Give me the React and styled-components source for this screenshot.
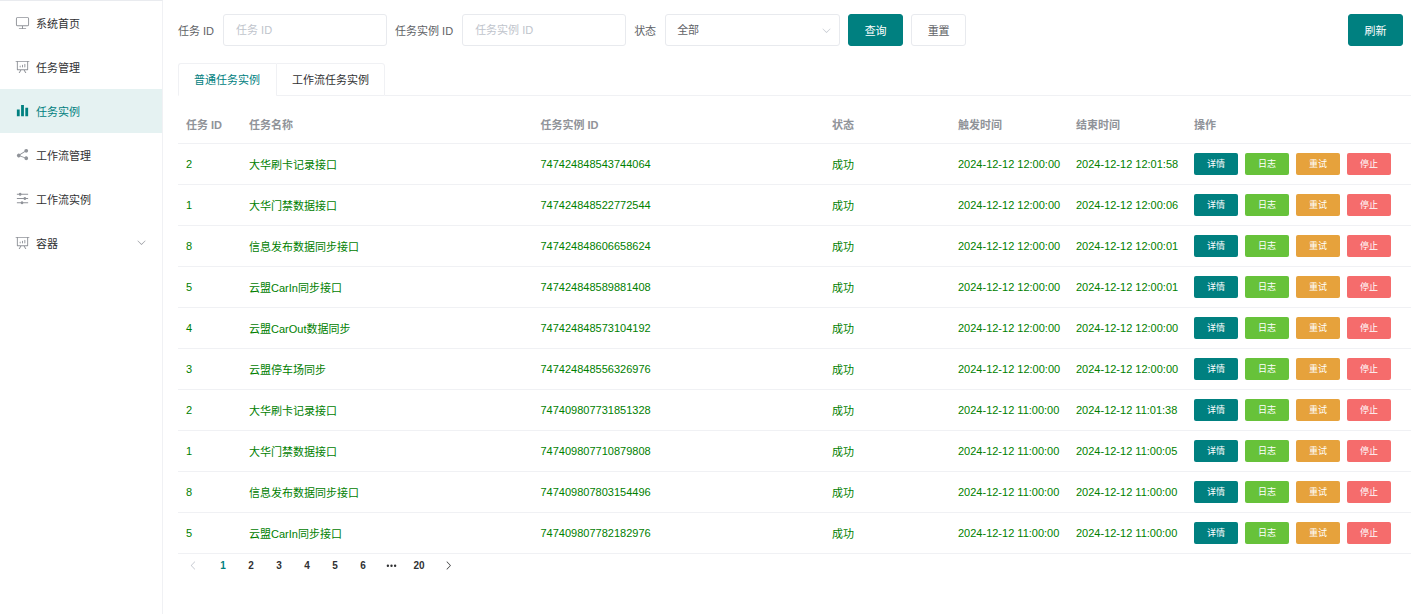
import React, { useState } from 'react';
import styled, { createGlobalStyle } from 'styled-components';

const ICONS = {
  monitor:
    'M544 768v128h192a32 32 0 1 1 0 64H288a32 32 0 1 1 0-64h192V768H192A128 128 0 0 1 64 640V256a128 128 0 0 1 128-128h640a128 128 0 0 1 128 128v384a128 128 0 0 1-128 128zM192 192a64 64 0 0 0-64 64v384a64 64 0 0 0 64 64h640a64 64 0 0 0 64-64V256a64 64 0 0 0-64-64z',
  board:
    'm665.216 768 110.848 192h-73.856L591.36 768H433.024L322.176 960H248.32l110.848-192H160a32 32 0 0 1-32-32V192H64a32 32 0 0 1 0-64h896a32 32 0 1 1 0 64h-64v544a32 32 0 0 1-32 32zM832 192H192v512h640zM352 448a32 32 0 0 1 32 32v64a32 32 0 0 1-64 0v-64a32 32 0 0 1 32-32m160-64a32 32 0 0 1 32 32v128a32 32 0 0 1-64 0V416a32 32 0 0 1 32-32m160-64a32 32 0 0 1 32 32v192a32 32 0 1 1-64 0V352a32 32 0 0 1 32-32',
  histogram: 'M416 896V128h192v768zm-288 0V448h192v448zm576 0V320h192v576z',
  share:
    'm679.872 348.8-301.76 188.608a127.808 127.808 0 0 1 5.12 52.16l279.936 104.96a128 128 0 1 1-22.464 59.904l-279.872-104.96a128 128 0 1 1-16.64-166.272l301.696-188.608a128 128 0 1 1 33.92 54.272z',
  operation:
    'M389.44 768a96.064 96.064 0 0 1 181.12 0H896v64H570.56a96.064 96.064 0 0 1-181.12 0H128v-64zm192-288a96.064 96.064 0 0 1 181.12 0H896v64H762.56a96.064 96.064 0 0 1-181.12 0H128v-64zm-320-288a96.064 96.064 0 0 1 181.12 0H896v64H442.56a96.064 96.064 0 0 1-181.12 0H128v-64z',
  down: 'M831.872 340.864 512 652.672 192.128 340.864a30.592 30.592 0 0 0-42.752 0 29.12 29.12 0 0 0 0 41.6L489.664 714.24a32 32 0 0 0 44.672 0l340.288-331.712a29.12 29.12 0 0 0 0-41.728 30.592 30.592 0 0 0-42.752 0z',
  left: 'M609.408 149.376 277.76 489.6a32 32 0 0 0 0 44.672l331.648 340.352a29.12 29.12 0 0 0 41.728 0 30.592 30.592 0 0 0 0-42.752L339.264 511.936l311.872-319.872a30.592 30.592 0 0 0 0-42.688 29.12 29.12 0 0 0-41.728 0z',
  right:
    'M340.864 149.312a30.592 30.592 0 0 0 0 42.752L652.736 512 340.864 831.872a30.592 30.592 0 0 0 0 42.752 29.12 29.12 0 0 0 41.728 0L714.24 534.336a32 32 0 0 0 0-44.672L382.592 149.376a29.12 29.12 0 0 0-41.728 0z',
  more: 'M176 416a112 112 0 1 1 0 224 112 112 0 0 1 0-224m336 0a112 112 0 1 1 0 224 112 112 0 0 1 0-224m336 0a112 112 0 1 1 0 224 112 112 0 0 1 0-224',
};

const MENUS = [
  { name: '系统首页', icon: 'monitor' },
  { name: '任务管理', icon: 'board' },
  { name: '任务实例', icon: 'histogram' },
  { name: '工作流管理', icon: 'share' },
  { name: '工作流实例', icon: 'operation' },
];

const TABS = ['普通任务实例', '工作流任务实例'];

const ROWS = [
  [2, '大华刷卡记录接口', '747424848543744064', '2024-12-12 12:00:00', '2024-12-12 12:01:58'],
  [1, '大华门禁数据接口', '747424848522772544', '2024-12-12 12:00:00', '2024-12-12 12:00:06'],
  [8, '信息发布数据同步接口', '747424848606658624', '2024-12-12 12:00:00', '2024-12-12 12:00:01'],
  [5, '云盟CarIn同步接口', '747424848589881408', '2024-12-12 12:00:00', '2024-12-12 12:00:01'],
  [4, '云盟CarOut数据同步', '747424848573104192', '2024-12-12 12:00:00', '2024-12-12 12:00:00'],
  [3, '云盟停车场同步', '747424848556326976', '2024-12-12 12:00:00', '2024-12-12 12:00:00'],
  [2, '大华刷卡记录接口', '747409807731851328', '2024-12-12 11:00:00', '2024-12-12 11:01:38'],
  [1, '大华门禁数据接口', '747409807710879808', '2024-12-12 11:00:00', '2024-12-12 11:00:05'],
  [8, '信息发布数据同步接口', '747409807803154496', '2024-12-12 11:00:00', '2024-12-12 11:00:00'],
  [5, '云盟CarIn同步接口', '747409807782182976', '2024-12-12 11:00:00', '2024-12-12 11:00:00'],
];

function Icon({ name, size = 15 }) {
  return (
    <svg
      viewBox="0 0 1024 1024"
      width={size}
      height={size}
      fill="currentColor"
      aria-hidden="true"
    >
      <path d={ICONS[name]} />
    </svg>
  );
}

function Sidebar() {
  const [current, setCurrent] = useState('任务实例');

  return (
    <StyledSidebar>
      {MENUS.map(({ name, icon }) => (
        <MenuLink
          key={name}
          href="#"
          $active={current === name}
          onClick={() => setCurrent(name)}
        >
          <Icon name={icon} />
          <span>{name}</span>
        </MenuLink>
      ))}
      <MenuLink as="button" type="button">
        <Icon name="board" />
        <span>容器</span>
        <MenuArrow>
          <Icon name="down" size={11} />
        </MenuArrow>
      </MenuLink>
    </StyledSidebar>
  );
}

function SearchForm() {
  const empty = { taskId: '', instanceId: '', status: '' };
  const [form, setForm] = useState(empty);

  const onChange = (e) => {
    const { value, name } = e.target;
    setForm({ ...form, [name]: value });
  };

  return (
    <Toolbar onSubmit={(e) => e.preventDefault()}>
      <Field>
        <label htmlFor="taskId">任务 ID</label>
        <TextInput
          id="taskId"
          name="taskId"
          value={form.taskId}
          onChange={onChange}
          placeholder="任务 ID"
        />
      </Field>
      <Field>
        <label htmlFor="instanceId">任务实例 ID</label>
        <TextInput
          id="instanceId"
          name="instanceId"
          value={form.instanceId}
          onChange={onChange}
          placeholder="任务实例 ID"
        />
      </Field>
      <Field>
        <label htmlFor="status">状态</label>
        <SelectWrap>
          <select id="status" name="status" value={form.status} onChange={onChange}>
            <option value="">全部</option>
            <option value="success">成功</option>
          </select>
          <Icon name="down" size={11} />
        </SelectWrap>
      </Field>
      <Button type="submit" $primary>
        查询
      </Button>
      <Button type="button" onClick={() => setForm(empty)}>
        重置
      </Button>
      <Spacer />
      <Button type="button" $primary>
        刷新
      </Button>
    </Toolbar>
  );
}

function InstanceTable() {
  return (
    <Table>
      <colgroup>
        <Col $width={63} />
        <Col />
        <Col />
        <Col $width={126} />
        <Col $width={118} />
        <Col $width={118} />
        <Col $width={225} />
      </colgroup>
      <thead>
        <tr>
          <th>任务 ID</th>
          <th>任务名称</th>
          <th>任务实例 ID</th>
          <th>状态</th>
          <th>触发时间</th>
          <th>结束时间</th>
          <th>操作</th>
        </tr>
      </thead>
      <tbody>
        {ROWS.map(([id, name, instanceId, start, end]) => (
          <tr key={instanceId}>
            <td>{id}</td>
            <td>{name}</td>
            <td>{instanceId}</td>
            <td>成功</td>
            <td>{start}</td>
            <td>{end}</td>
            <td>
              <Actions>
                <ActionButton type="button" $color="#008080">
                  详情
                </ActionButton>
                <ActionButton type="button" $color="#67c23a">
                  日志
                </ActionButton>
                <ActionButton type="button" $color="#e6a23c">
                  重试
                </ActionButton>
                <ActionButton type="button" $color="#f56c6c">
                  停止
                </ActionButton>
              </Actions>
            </td>
          </tr>
        ))}
      </tbody>
    </Table>
  );
}

function Pagination() {
  const [page, setPage] = useState(1);

  return (
    <Pager aria-label="分页">
      <PageArrow
        type="button"
        aria-label="上一页"
        disabled={page === 1}
        onClick={() => setPage(page - 1)}
      >
        <Icon name="left" size={11} />
      </PageArrow>
      {[1, 2, 3, 4, 5, 6].map((num) => (
        <PageButton
          key={num}
          type="button"
          $active={page === num}
          onClick={() => setPage(num)}
        >
          {num}
        </PageButton>
      ))}
      <PageButton type="button" aria-label="更多">
        <Icon name="more" size={11} />
      </PageButton>
      <PageButton type="button" $active={page === 20} onClick={() => setPage(20)}>
        20
      </PageButton>
      <PageArrow
        type="button"
        aria-label="下一页"
        disabled={page === 20}
        onClick={() => setPage(page + 1)}
      >
        <Icon name="right" size={11} />
      </PageArrow>
    </Pager>
  );
}

function App() {
  const [tab, setTab] = useState(TABS[0]);

  return (
    <>
      <GlobalStyle />
      <Layout>
        <Sidebar />
        <Main>
          <SearchForm />
          <TabBar role="tablist">
            {TABS.map((name) => (
              <Tab
                key={name}
                type="button"
                role="tab"
                aria-selected={tab === name}
                $active={tab === name}
                onClick={() => setTab(name)}
              >
                {name}
              </Tab>
            ))}
            <TabLine />
          </TabBar>
          <InstanceTable />
          <Pagination />
        </Main>
      </Layout>
    </>
  );
}

export default App;

const GlobalStyle = createGlobalStyle`
  * {
    box-sizing: border-box;
  }
  body {
    margin: 0;
    background: #fff;
    color: #303133;
  }
  body, button, input, select {
    font-family: "Liberation Sans", "Noto Sans CJK SC", sans-serif;
    font-size: 11px;
  }
  button, select, a {
    cursor: pointer;
  }
  svg {
    flex: none;
  }
`;

const Layout = styled.div`
  display: flex;
  min-height: 100vh;
`;

const StyledSidebar = styled.nav`
  flex: none;
  width: 163px;
  border-top: 1px solid #e9ebef;
  border-right: 1px solid #f0f1f4;
`;

const MenuLink = styled.a`
  display: flex;
  align-items: center;
  gap: 6px;
  width: 100%;
  height: 44px;
  padding: 0 15px 1px;
  border: none;
  background: ${({ $active }) => ($active ? '#e5f2f2' : 'transparent')};
  color: ${({ $active }) => ($active ? '#008080' : '#303133')};
  text-decoration: none;
  svg {
    color: ${({ $active }) => ($active ? '#008080' : '#909399')};
  }
`;

const MenuArrow = styled.span`
  display: flex;
  margin-left: auto;
`;

const Main = styled.main`
  flex: 1;
  min-width: 0;
  padding: 14px 9px 14px 15px;
`;

const Toolbar = styled.form`
  display: flex;
  align-items: center;
  gap: 8px;
  padding-right: 8px;
`;

const Field = styled.div`
  display: flex;
  align-items: center;
  gap: 9px;
  color: #606266;
  white-space: nowrap;
`;

const TextInput = styled.input`
  width: 164px;
  height: 32px;
  padding: 0 12px;
  border: 1px solid #e8eaee;
  border-radius: 3px;
  outline: none;
  color: #606266;
  &::placeholder {
    color: #c0c4cc;
  }
`;

const SelectWrap = styled.div`
  position: relative;
  select {
    width: 175px;
    height: 32px;
    padding: 0 11px;
    border: 1px solid #e8eaee;
    border-radius: 3px;
    outline: none;
    appearance: none;
    background: #fff;
    color: #606266;
  }
  svg {
    position: absolute;
    top: 11px;
    right: 8px;
    color: #c0c4cc;
    pointer-events: none;
  }
`;

const Button = styled.button`
  width: 55px;
  height: 32px;
  padding: 0 0 1px;
  border: 1px solid ${({ $primary }) => ($primary ? '#008080' : '#e8eaee')};
  border-radius: 3px;
  background: ${({ $primary }) => ($primary ? '#008080' : '#fff')};
  color: ${({ $primary }) => ($primary ? '#fff' : '#606266')};
`;

const Spacer = styled.div`
  flex: 1;
`;

const TabBar = styled.div`
  display: flex;
  height: 33px;
  margin: 17px 0 10px;
`;

const Tab = styled.button`
  padding: 0 15px 2px;
  border: 1px solid #f0f1f4;
  border-bottom-color: ${({ $active }) => ($active ? '#fff' : '#f0f1f4')};
  border-right-width: 0;
  background: #fff;
  color: ${({ $active }) => ($active ? '#008080' : '#303133')};
  &:first-child {
    border-top-left-radius: 3px;
    padding-right: 16px;
  }
  &:nth-last-child(2) {
    border-right-width: 1px;
    border-top-right-radius: 3px;
  }
`;

const TabLine = styled.div`
  flex: 1;
  border-bottom: 1px solid #f0f1f4;
`;

const Table = styled.table`
  width: 100%;
  table-layout: fixed;
  border-collapse: separate;
  border-spacing: 0;
  th,
  td {
    padding: 0 8px 1px;
    border-bottom: 1px solid #f0f1f4;
    text-align: left;
    white-space: nowrap;
  }
  th {
    height: 38px;
    color: #909399;
  }
  td {
    height: 41px;
    color: #008000;
  }
`;

const Col = styled.col`
  width: ${({ $width }) => ($width ? `${$width}px` : 'auto')};
`;

const Actions = styled.div`
  display: flex;
  gap: 7px;
`;

const ActionButton = styled.button`
  width: 44px;
  height: 22px;
  padding: 0 0 1px;
  border: none;
  border-radius: 2px;
  background: ${({ $color }) => $color};
  color: #fff;
  font-size: 9px;
`;

const Pager = styled.nav`
  display: flex;
  align-items: center;
`;

const PageButton = styled.button`
  display: flex;
  align-items: center;
  justify-content: center;
  width: 28px;
  height: 22px;
  padding: 0;
  border: none;
  background: none;
  color: ${({ $active }) => ($active ? '#008080' : '#303133')};
  font-size: 10px;
  font-weight: bold;
`;

const PageArrow = styled(PageButton)`
  width: 31px;
  &:disabled {
    color: #c0c4cc;
    cursor: not-allowed;
  }
`;
